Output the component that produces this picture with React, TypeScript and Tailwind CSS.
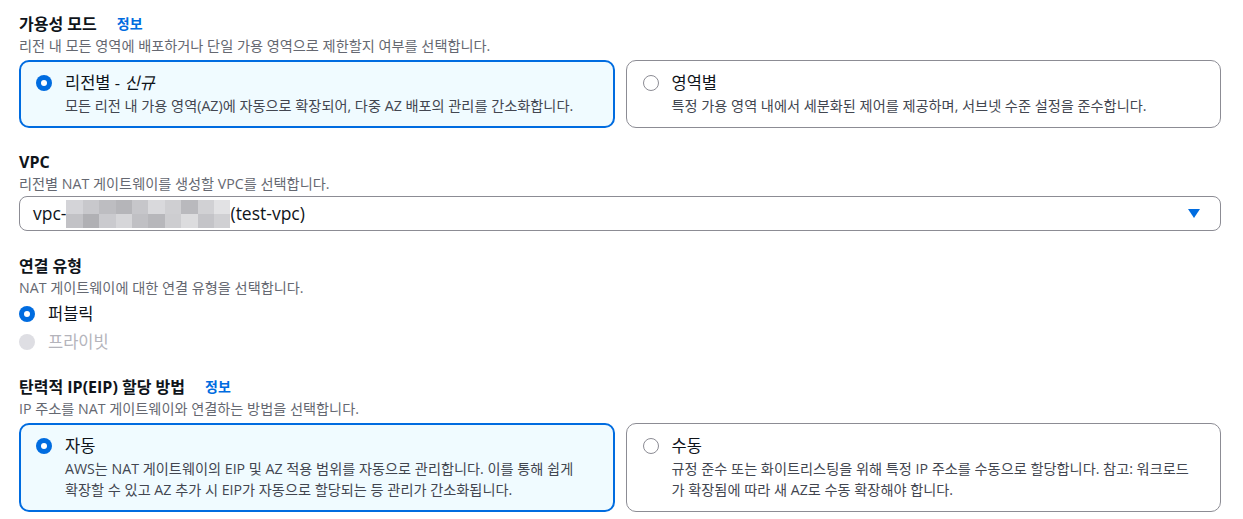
import React from 'react';

const font = "font-['Open_Sans','Noto_Sans_CJK_KR',sans-serif]";

function Radio({ checked, disabled }: { checked?: boolean; disabled?: boolean }) {
  if (disabled) return <span className="block w-4 h-4 shrink-0 rounded-full bg-[#dedee3]" />;
  if (checked)
    return (
      <span className="flex w-4 h-4 shrink-0 items-center justify-center rounded-full bg-[#006ce0]">
        <span className="block w-[6px] h-[6px] rounded-full bg-white" />
      </span>
    );
  return <span className="block w-4 h-4 shrink-0 rounded-full border-[1.5px] border-[#8c8c94] bg-white" />;
}

function Info() {
  return <span className="ml-[20px] text-[14px] font-bold text-[#006ce0]">정보</span>;
}

function Card({ checked, title, desc }: { checked?: boolean; title: React.ReactNode; desc: React.ReactNode }) {
  return (
    <div
      className={
        checked
          ? 'flex-1 rounded-[10px] border-2 border-[#006ce0] bg-[#f0fbff] px-[15px] pt-[9px] pb-[10px]'
          : 'flex-1 rounded-[10px] border border-[#8c8c94] bg-white px-4 pt-[10px] pb-[11px]'
      }
    >
      <div className="flex items-center gap-[13px]">
        <Radio checked={checked} />
        <span className="text-[16.5px] leading-[24px] text-[#0f141a]">{title}</span>
      </div>
      <p className="pl-[29px] text-[14.2px] leading-[21px] text-[#424650]">{desc}</p>
    </div>
  );
}

function Heading({ children, info, desc }: { children: React.ReactNode; info?: boolean; desc: string }) {
  return (
    <div>
      <div className="flex items-center text-[16px] leading-[22px] font-bold text-[#0f141a]">
        {children}
        {info && <Info />}
      </div>
      <p className="text-[14.2px] leading-[22px] text-[#656871]">{desc}</p>
    </div>
  );
}

const mosaic = [
  '#d4d4d8', '#c8c8cc', '#bdbdc1', '#b5b5b9', '#c6c6ca', '#d9d9dc', '#cfcfd2', '#b9b9bd', '#d1d1d4', '#e2e2e4',
  '#c2c2c6', '#b0b0b4', '#cacace', '#d6d6d9', '#c0c0c4', '#b7b7bb', '#cdcdd0', '#dcdcde', '#c4c4c8', '#d0d0d3',
];

export default function App() {
  return (
    <div className={`${font} w-[1243px] h-[519px] bg-white pl-[19px] pr-[22px] pt-[13px] overflow-hidden`}>
      <Heading info desc="리전 내 모든 영역에 배포하거나 단일 가용 영역으로 제한할지 여부를 선택합니다.">가용성 모드</Heading>
      <div className="mt-[3px] flex gap-[11px]">
        <Card
          checked
          title={<>리전별 - <i>신규</i></>}
          desc="모든 리전 내 가용 영역(AZ)에 자동으로 확장되어, 다중 AZ 배포의 관리를 간소화합니다."
        />
        <Card title="영역별" desc="특정 가용 영역 내에서 세분화된 제어를 제공하며, 서브넷 수준 설정을 준수합니다." />
      </div>

      <div className="mt-[23px]">
        <Heading desc="리전별 NAT 게이트웨이를 생성할 VPC를 선택합니다.">VPC</Heading>
      </div>
      <div className="mt-[1px] flex h-[35px] items-center justify-between rounded-[8px] border border-[#8c8c94] pl-[13px] pr-[20px]">
        <div className="flex items-center text-[17.5px] text-[#0f141a]">
          <span>vpc-</span>
          <span className="flex h-[28px] w-[164px] flex-wrap overflow-hidden">
            {mosaic.map((c, i) => (
              <span key={i} className="block h-[14px] w-[16.4px]" style={{ background: c }} />
            ))}
          </span>
          <span>(test-vpc)</span>
        </div>
        <svg width="12" height="9" viewBox="0 0 12 9">
          <path d="M0 0h12L6 9z" fill="#006ce0" />
        </svg>
      </div>

      <div className="mt-[24px]">
        <Heading desc="NAT 게이트웨이에 대한 연결 유형을 선택합니다.">연결 유형</Heading>
      </div>
      <div className="mt-[3px] flex flex-col gap-[4px]">
        <div className="flex items-center gap-[13px]">
          <Radio checked />
          <span className="text-[16.5px] leading-[24px] text-[#0f141a]">퍼블릭</span>
        </div>
        <div className="flex items-center gap-[13px]">
          <Radio disabled />
          <span className="text-[16.5px] leading-[24px] text-[#b4b4bb]">프라이빗</span>
        </div>
      </div>

      <div className="mt-[22px]">
        <Heading info desc="IP 주소를 NAT 게이트웨이와 연결하는 방법을 선택합니다.">탄력적 IP(EIP) 할당 방법</Heading>
      </div>
      <div className="mt-[3px] flex gap-[11px]">
        <Card
          checked
          title="자동"
          desc={
            <>
              AWS는 NAT 게이트웨이의 EIP 및 AZ 적용 범위를 자동으로 관리합니다. 이를 통해 쉽게
              <br />
              확장할 수 있고 AZ 추가 시 EIP가 자동으로 할당되는 등 관리가 간소화됩니다.
            </>
          }
        />
        <Card
          title="수동"
          desc={
            <>
              규정 준수 또는 화이트리스팅을 위해 특정 IP 주소를 수동으로 할당합니다. 참고: 워크로드
              <br />
              가 확장됨에 따라 새 AZ로 수동 확장해야 합니다.
            </>
          }
        />
      </div>
    </div>
  );
}
